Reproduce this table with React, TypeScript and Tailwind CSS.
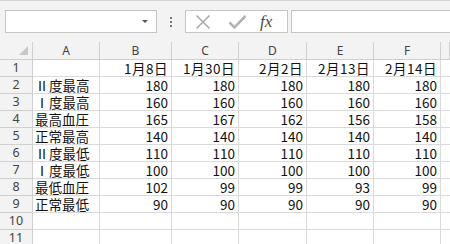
import React from 'react';

const cols = ['A', 'B', 'C', 'D', 'E', 'F', ''];

// rows of the sheet: label + five values
const rows: string[][] = [
  ['', '1月8日', '1月30日', '2月2日', '2月13日', '2月14日'],
  ['Ⅱ度最高', '180', '180', '180', '180', '180'],
  ['Ⅰ度最高', '160', '160', '160', '160', '160'],
  ['最高血圧', '165', '167', '162', '156', '158'],
  ['正常最高', '140', '140', '140', '140', '140'],
  ['Ⅱ度最低', '110', '110', '110', '110', '110'],
  ['Ⅰ度最低', '100', '100', '100', '100', '100'],
  ['最低血圧', '102', '99', '99', '93', '99'],
  ['正常最低', '90', '90', '90', '90', '90'],
  ['', '', '', '', '', ''],
  ['', '', '', '', '', ''],
];

const cellFont = { fontFamily: '"Noto Sans CJK JP", "Noto Sans", sans-serif' };
const hdrFont = { fontFamily: '"Noto Sans", "Liberation Sans", sans-serif' };

// roman numerals are full width in the sheet font
function Label({ text }: { text: string }) {
  const first = text.charAt(0);
  if (first === 'Ⅰ' || first === 'Ⅱ') {
    return (
      <>
        <span className="inline-block w-[14px] text-center">{first}</span>
        {text.slice(1)}
      </>
    );
  }
  return <>{text}</>;
}

export default function App() {
  return (
    <div className="w-[450px] h-[244px] overflow-hidden bg-white">
      {/* formula bar */}
      <div className="h-[42px] bg-[#f3f3f3] border-t border-[#d4d4d4] flex items-start pt-[9px]">
        <div className="ml-[5px] w-[152px] h-[23px] bg-white border border-[#c6c6c6] flex items-center justify-end pr-[8px]">
          <div className="w-0 h-0 border-l-[3px] border-r-[3px] border-t-[3px] border-l-transparent border-r-transparent border-t-[#555]" />
        </div>
        <div className="w-[28px] h-[23px] flex flex-col items-center justify-center gap-[2px]">
          <div className="w-[2px] h-[2px] bg-[#777]" />
          <div className="w-[2px] h-[2px] bg-[#777]" />
          <div className="w-[2px] h-[2px] bg-[#777]" />
        </div>
        <div className="w-[103px] h-[23px] bg-white border border-[#c6c6c6] flex items-center">
          <svg className="ml-[9px]" width="16" height="16" viewBox="0 0 16 16">
            <path d="M1.5 1.5 L14.5 14.5 M14.5 1.5 L1.5 14.5" stroke="#ababab" strokeWidth="1.6" fill="none" />
          </svg>
          <svg className="ml-[17px]" width="19" height="16" viewBox="0 0 19 16">
            <path d="M1.5 8.5 L6.5 13.5 L17.5 2" stroke="#b3b3b3" strokeWidth="2.6" fill="none" />
          </svg>
          <span
            className="ml-[13px] text-[17px] italic leading-none text-[#4a4a4a]"
            style={{ fontFamily: '"Liberation Serif", "DejaVu Serif", serif' }}
          >
            fx
          </span>
        </div>
        <div className="ml-[3px] flex-1 h-[23px] bg-white border-y border-l border-[#c6c6c6]" />
      </div>

      {/* sheet */}
      <div className="grid grid-cols-[33px_67px_72px_67px_68px_67px_67px_1fr]">
        {/* column headers */}
        <div className="h-[18px] bg-[#f3f3f3] border-r border-b border-[#d0d0d0] relative">
          <div className="absolute right-[4px] bottom-[4px] w-0 h-0 border-l-[9px] border-b-[9px] border-l-transparent border-b-[#c8c8c8]" />
        </div>
        {cols.map((c, i) => (
          <div
            key={'h' + i}
            className="h-[18px] bg-[#f3f3f3] border-r border-b border-[#d0d0d0] flex items-center justify-center text-[12px] leading-[17px] text-[#444]"
            style={hdrFont}
          >
            {c}
          </div>
        ))}

        {rows.map((r, ri) => (
          <React.Fragment key={ri}>
            <div
              className="h-[17px] bg-[#f3f3f3] border-r border-b border-[#d0d0d0] flex items-center justify-center text-[12.5px] leading-[16px] text-[#444]"
              style={hdrFont}
            >
              {ri + 1}
            </div>
            {r.map((v, ci) => (
              <div
                key={ci}
                className={`h-[17px] border-r border-b border-[#dadada] flex items-center text-[13.5px] leading-[16px] text-[#111] whitespace-nowrap ${
                  ci === 0 ? 'justify-start pl-[2px]' : 'justify-end pr-[3px]'
                } ${ri === 0 ? 'tracking-[0.5px]' : ''}`}
                style={cellFont}
              >
                {ci === 0 ? <Label text={v} /> : v}
              </div>
            ))}
            <div className="h-[17px] border-b border-[#dadada]" />
          </React.Fragment>
        ))}
      </div>
    </div>
  );
}
